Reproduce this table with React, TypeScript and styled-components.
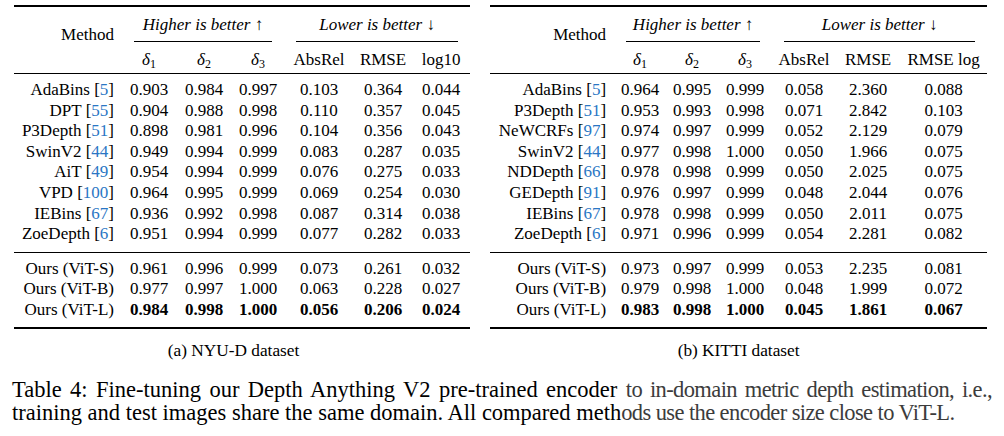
import React from 'react'
import styled, { createGlobalStyle } from 'styled-components'

const GlobalStyle = createGlobalStyle`
  html, body {
    margin: 0;
    padding: 0;
    background: #fff;
  }
  body {
    font-family: "Liberation Serif", "Times New Roman", serif;
    color: #000;
  }
`

const Page = styled.div`
  width: 1004px;
  height: 436px;
  padding-top: 5px;
  box-sizing: border-box;
  overflow: hidden;
`

const Figures = styled.div`
  display: flex;
  align-items: flex-start;
  gap: 20px;
  padding-left: 14px;
`

const Figure = styled.figure`
  margin: 0;
  display: flex;
  flex-direction: column;
  align-items: center;
`

const Table = styled.table`
  table-layout: fixed;
  border-collapse: separate;
  border-spacing: 0;
  border-top: 2px solid #000;
  border-bottom: 2px solid #000;
  font-size: 17px;
`

const MethodHead = styled.th`
  font-weight: normal;
  text-align: right;
  vertical-align: top;
  padding: 17.5px 8px 0 0;
  line-height: 20px;
  border-bottom: 1px solid #000;
`

const GroupHead = styled.th`
  font-weight: normal;
  padding: 8px 0 0;
  line-height: 20px;
`

const GroupLabel = styled.div`
  margin: 0 12px;
  padding-bottom: 6px;
  border-bottom: 1px solid #000;
  font-style: italic;
  white-space: nowrap;

  span {
    font-style: normal;
  }
`

const ColHead = styled.th`
  font-weight: normal;
  text-align: center;
  padding: 8px 0 3px;
  line-height: 20px;
  border-bottom: 1px solid #000;
  white-space: nowrap;
`

const Sub = styled.sub`
  font-size: 12px;
  vertical-align: -3px;
  line-height: 0;
`

const Body = styled.tbody<{ $ruled?: boolean }>`
  tr:first-child td {
    padding-top: 6px;
    border-top: ${p => (p.$ruled ? '1px solid #000' : 'none')};
  }
  tr:last-child td {
    padding-bottom: ${p => (p.$ruled ? '6px' : '7px')};
  }
`

const Name = styled.td`
  text-align: right;
  padding: 0 8px 0 0;
  line-height: 20.6px;
  white-space: nowrap;
`

const Cite = styled.span`
  color: #2a76c4;
`

const Cell = styled.td<{ $bold?: boolean }>`
  text-align: center;
  padding: 0;
  line-height: 20.6px;
  font-weight: ${p => (p.$bold ? 'bold' : 'normal')};
`

const SubCaption = styled.figcaption<{ $shift?: number }>`
  margin-top: 12px;
  padding-right: ${p => p.$shift ?? 0}px;
  font-size: 17.3px;
  line-height: 20px;
`

const Caption = styled.div`
  margin-top: 17px;
  padding: 0 12px;
  font-size: 22.5px;
  line-height: 23.5px;
`

const CaptionLine = styled.div<{ $justify?: boolean }>`
  white-space: nowrap;
  text-align: ${p => (p.$justify ? 'justify' : 'left')};
  text-align-last: ${p => (p.$justify ? 'justify' : 'left')};
`

const Faded = styled.span`
  color: #3c3c3c;
  letter-spacing: -0.6px;
`

type Row = { name: string; cite?: string; vals: string[] }

const nyuRows: Row[] = [
  { name: 'AdaBins', cite: '5', vals: ['0.903', '0.984', '0.997', '0.103', '0.364', '0.044'] },
  { name: 'DPT', cite: '55', vals: ['0.904', '0.988', '0.998', '0.110', '0.357', '0.045'] },
  { name: 'P3Depth', cite: '51', vals: ['0.898', '0.981', '0.996', '0.104', '0.356', '0.043'] },
  { name: 'SwinV2', cite: '44', vals: ['0.949', '0.994', '0.999', '0.083', '0.287', '0.035'] },
  { name: 'AiT', cite: '49', vals: ['0.954', '0.994', '0.999', '0.076', '0.275', '0.033'] },
  { name: 'VPD', cite: '100', vals: ['0.964', '0.995', '0.999', '0.069', '0.254', '0.030'] },
  { name: 'IEBins', cite: '67', vals: ['0.936', '0.992', '0.998', '0.087', '0.314', '0.038'] },
  { name: 'ZoeDepth', cite: '6', vals: ['0.951', '0.994', '0.999', '0.077', '0.282', '0.033'] },
]

const nyuOurs: Row[] = [
  { name: 'Ours (ViT-S)', vals: ['0.961', '0.996', '0.999', '0.073', '0.261', '0.032'] },
  { name: 'Ours (ViT-B)', vals: ['0.977', '0.997', '1.000', '0.063', '0.228', '0.027'] },
  { name: 'Ours (ViT-L)', vals: ['0.984', '0.998', '1.000', '0.056', '0.206', '0.024'] },
]

const kittiRows: Row[] = [
  { name: 'AdaBins', cite: '5', vals: ['0.964', '0.995', '0.999', '0.058', '2.360', '0.088'] },
  { name: 'P3Depth', cite: '51', vals: ['0.953', '0.993', '0.998', '0.071', '2.842', '0.103'] },
  { name: 'NeWCRFs', cite: '97', vals: ['0.974', '0.997', '0.999', '0.052', '2.129', '0.079'] },
  { name: 'SwinV2', cite: '44', vals: ['0.977', '0.998', '1.000', '0.050', '1.966', '0.075'] },
  { name: 'NDDepth', cite: '66', vals: ['0.978', '0.998', '0.999', '0.050', '2.025', '0.075'] },
  { name: 'GEDepth', cite: '91', vals: ['0.976', '0.997', '0.999', '0.048', '2.044', '0.076'] },
  { name: 'IEBins', cite: '67', vals: ['0.978', '0.998', '0.999', '0.050', '2.011', '0.075'] },
  { name: 'ZoeDepth', cite: '6', vals: ['0.971', '0.996', '0.999', '0.054', '2.281', '0.082'] },
]

const kittiOurs: Row[] = [
  { name: 'Ours (ViT-S)', vals: ['0.973', '0.997', '0.999', '0.053', '2.235', '0.081'] },
  { name: 'Ours (ViT-B)', vals: ['0.979', '0.998', '1.000', '0.048', '1.999', '0.072'] },
  { name: 'Ours (ViT-L)', vals: ['0.983', '0.998', '1.000', '0.045', '1.861', '0.067'] },
]

function ResultTable(props: { widths: number[]; metrics: string[]; rows: Row[]; ours: Row[] }) {
  const { widths, metrics, rows, ours } = props
  return (
    <Table style={{ width: widths.reduce((a, b) => a + b, 0) }}>
      <colgroup>
        {widths.map((w, i) => (
          <col key={i} style={{ width: w }} />
        ))}
      </colgroup>
      <thead>
        <tr>
          <MethodHead rowSpan={2}>Method</MethodHead>
          <GroupHead colSpan={3}>
            <GroupLabel>
              Higher is better <span>↑</span>
            </GroupLabel>
          </GroupHead>
          <GroupHead colSpan={3}>
            <GroupLabel>
              Lower is better <span>↓</span>
            </GroupLabel>
          </GroupHead>
        </tr>
        <tr>
          {[1, 2, 3].map(n => (
            <ColHead key={n}>
              <i>δ</i>
              <Sub>{n}</Sub>
            </ColHead>
          ))}
          {metrics.map(m => (
            <ColHead key={m}>{m}</ColHead>
          ))}
        </tr>
      </thead>
      <Body>
        {rows.map(r => (
          <tr key={r.name}>
            <Name>
              {r.name} [<Cite>{r.cite}</Cite>]
            </Name>
            {r.vals.map((v, i) => (
              <Cell key={i}>{v}</Cell>
            ))}
          </tr>
        ))}
      </Body>
      <Body $ruled>
        {ours.map((r, idx) => (
          <tr key={r.name}>
            <Name>{r.name}</Name>
            {r.vals.map((v, i) => (
              <Cell key={i} $bold={idx === ours.length - 1}>
                {v}
              </Cell>
            ))}
          </tr>
        ))}
      </Body>
    </Table>
  )
}

const App: React.FC = () => {
  return (
    <Page>
      <GlobalStyle />
      <Figures>
        <Figure>
          <ResultTable
            widths={[108, 54, 56, 52, 70, 58, 58]}
            metrics={['AbsRel', 'RMSE', 'log10']}
            rows={nyuRows}
            ours={nyuOurs}
          />
          <SubCaption $shift={17}>(a) NYU-D dataset</SubCaption>
        </Figure>
        <Figure>
          <ResultTable
            widths={[124, 52, 52, 54, 64, 64, 87]}
            metrics={['AbsRel', 'RMSE', 'RMSE log']}
            rows={kittiRows}
            ours={kittiOurs}
          />
          <SubCaption>(b) KITTI dataset</SubCaption>
        </Figure>
      </Figures>
      <Caption>
        <CaptionLine $justify>
          Table 4: Fine-tuning our Depth Anything V2 pre-trained encoder{' '}
          <Faded>to in-domain metric depth estimation, i.e.,</Faded>
        </CaptionLine>
        <CaptionLine>
          training and test images share the same domain. All compared meth
          <Faded>ods use the encoder size close to ViT-L.</Faded>
        </CaptionLine>
      </Caption>
    </Page>
  )
}

export default App
